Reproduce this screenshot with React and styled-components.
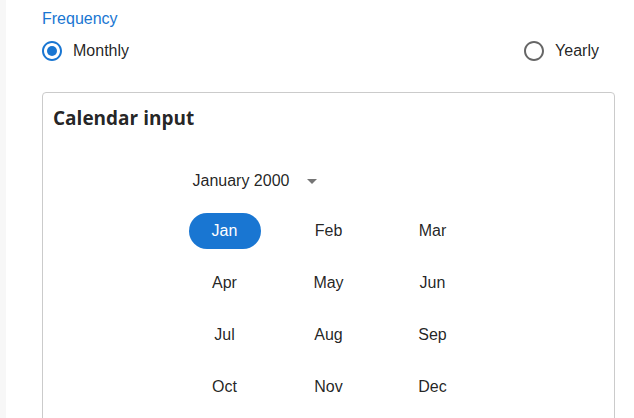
import React, { useState } from "react";
import styled, { createGlobalStyle } from "styled-components";

const MONTHS = [
  "Jan", "Feb", "Mar",
  "Apr", "May", "Jun",
  "Jul", "Aug", "Sep",
  "Oct", "Nov", "Dec",
];

function RadioIcon({ checked }) {
  return (
    <svg width="24" height="24" viewBox="0 0 24 24" aria-hidden="true">
      <path
        fill="currentColor"
        d="M12 2C6.48 2 2 6.48 2 12s4.48 10 10 10 10-4.48 10-10S17.52 2 12 2zm0 18c-4.42 0-8-3.58-8-8s3.58-8 8-8 8 3.58 8 8-3.58 8-8 8z"
      />
      {checked && <circle cx="12" cy="12" r="5" fill="currentColor" />}
    </svg>
  );
}

function App() {
  const [frequency, setFrequency] = useState("monthly");
  const [month, setMonth] = useState("Jan");

  return (
    <>
      <GlobalStyle />
      <Page>
        <FieldLabel>Frequency</FieldLabel>
        <RadioRow>
          <RadioOption onClick={() => setFrequency("monthly")}>
            <RadioBox checked={frequency === "monthly"}>
              <RadioIcon checked={frequency === "monthly"} />
            </RadioBox>
            <span>Monthly</span>
          </RadioOption>
          <RadioOption onClick={() => setFrequency("yearly")}>
            <RadioBox checked={frequency === "yearly"}>
              <RadioIcon checked={frequency === "yearly"} />
            </RadioBox>
            <span>Yearly</span>
          </RadioOption>
        </RadioRow>

        <Card>
          <CardTitle>Calendar input</CardTitle>
          <Calendar>
            <CalendarHeader>
              <HeaderLabel>January 2000</HeaderLabel>
              <SwitchViewButton aria-label="switch view">
                <svg width="24" height="24" viewBox="0 0 24 24">
                  <path fill="currentColor" d="M7 10l5 5 5-5z" />
                </svg>
              </SwitchViewButton>
            </CalendarHeader>
            <MonthGrid>
              {MONTHS.map((m) => (
                <MonthCell key={m}>
                  <MonthButton
                    selected={m === month}
                    onClick={() => setMonth(m)}
                  >
                    {m}
                  </MonthButton>
                </MonthCell>
              ))}
            </MonthGrid>
          </Calendar>
        </Card>
      </Page>
    </>
  );
}

export default App;

// styles

const GlobalStyle = createGlobalStyle`
  body {
    margin: 0;
    background: #fff;
    font-family: "Liberation Sans", Arial, sans-serif;
    color: rgba(0, 0, 0, 0.87);
  }
`;

const Page = styled.div`
  min-height: 100vh;
  box-sizing: border-box;
  border-left: 6px solid #f7f7f7;
  padding: 8px 19px 0 36px;
`;

const FieldLabel = styled.div`
  font-size: 16px;
  line-height: 22px;
  color: #1976d2;
`;

const RadioRow = styled.div`
  display: flex;
  justify-content: space-between;
  align-items: center;
`;

const RadioOption = styled.label`
  display: inline-flex;
  align-items: center;
  margin-left: -11px;
  margin-right: 16px;
  font-size: 16px;
  line-height: 24px;
  cursor: pointer;
`;

const RadioBox = styled.span`
  display: inline-flex;
  padding: 9px;
  color: ${(p) => (p.checked ? "#1976d2" : "rgba(0, 0, 0, 0.6)")};

  svg {
    display: block;
  }
`;

const Card = styled.div`
  margin-top: 20px;
  border: 1px solid #cbcbcb;
  border-radius: 4px;
  padding: 11px 10px 40px;
`;

const CardTitle = styled.div`
  font-family: "Open Sans", "Noto Sans", sans-serif;
  font-weight: 700;
  font-size: 19px;
  line-height: 28px;
  color: rgba(0, 0, 0, 0.87);
`;

const Calendar = styled.div`
  width: 320px;
  margin: 34px auto 0;
`;

const CalendarHeader = styled.div`
  display: flex;
  align-items: center;
  margin-top: 12px;
  margin-bottom: 9px;
  padding: 0 12px 0 24px;
  min-height: 30px;
  max-height: 30px;
`;

const HeaderLabel = styled.div`
  font-size: 16px;
  line-height: 24px;
  margin-right: 6px;
`;

const SwitchViewButton = styled.button`
  display: inline-flex;
  padding: 5px;
  border: none;
  background: transparent;
  color: rgba(0, 0, 0, 0.54);
  border-radius: 50%;
  cursor: pointer;

  svg {
    display: block;
  }
`;

const MonthGrid = styled.div`
  display: grid;
  grid-template-columns: repeat(3, 1fr);
  padding: 0 4px;
`;

const MonthCell = styled.div`
  display: flex;
  justify-content: center;
  align-items: center;
  height: 52px;
`;

const MonthButton = styled.button`
  width: 72px;
  height: 36px;
  border: none;
  border-radius: 18px;
  font-family: "Liberation Sans", Arial, sans-serif;
  font-size: 16px;
  cursor: pointer;
  background: ${(p) => (p.selected ? "#1976d2" : "transparent")};
  color: ${(p) => (p.selected ? "#fff" : "rgba(0, 0, 0, 0.87)")};
`;
